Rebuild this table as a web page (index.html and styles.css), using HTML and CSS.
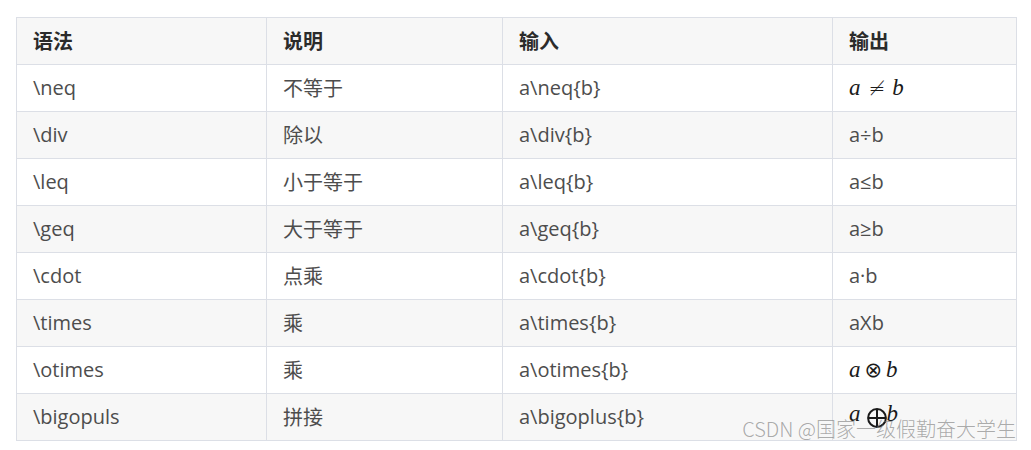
FILE: index.html
```html
<!DOCTYPE html>
<html lang="zh-CN">
<head>
<meta charset="utf-8">
<title>LaTeX 运算符</title>
<link rel="stylesheet" href="styles.css">
</head>
<body>
<div class="page">
  <table class="ops">
    <colgroup>
      <col class="c1"><col class="c2"><col class="c3"><col class="c4">
    </colgroup>
    <thead>
      <tr><th>语法</th><th>说明</th><th>输入</th><th>输出</th></tr>
    </thead>
    <tbody>
      <tr><td>\neq</td><td>不等于</td><td>a\neq{b}</td><td><span class="math"><i>a</i><span class="rel">≠</span><i>b</i></span></td></tr>
      <tr><td>\div</td><td>除以</td><td>a\div{b}</td><td>a÷b</td></tr>
      <tr><td>\leq</td><td>小于等于</td><td>a\leq{b}</td><td>a≤b</td></tr>
      <tr><td>\geq</td><td>大于等于</td><td>a\geq{b}</td><td>a≥b</td></tr>
      <tr><td>\cdot</td><td>点乘</td><td>a\cdot{b}</td><td>a·b</td></tr>
      <tr><td>\times</td><td>乘</td><td>a\times{b}</td><td>aXb</td></tr>
      <tr><td>\otimes</td><td>乘</td><td>a\otimes{b}</td><td><span class="math"><i>a</i><span class="bin">⊗</span><i>b</i></span></td></tr>
      <tr><td>\bigopuls</td><td>拼接</td><td>a\bigoplus{b}</td><td><span class="math raised"><i>a</i><svg class="bigop" viewBox="0 0 20 20" width="20" height="20" aria-hidden="true"><circle cx="10" cy="10" r="8.9" fill="none" stroke="#1a1a1a" stroke-width="2"/><path d="M10 1.1V18.9M1.1 10H18.9" stroke="#1a1a1a" stroke-width="2"/></svg><i>b</i></span></td></tr>
    </tbody>
  </table>
  <div class="watermark">CSDN @国家一级假勤奋大学生</div>
</div>
</body>
</html>
```

FILE: styles.css
```css
html, body {
  margin: 0;
  padding: 0;
  background: #ffffff;
}

.page {
  position: relative;
  width: 1031px;
  height: 450px;
  overflow: hidden;
  padding: 17px 0 0 16px;
  box-sizing: border-box;
  font-family: "Open Sans", "Noto Sans CJK SC", sans-serif;
  font-size: 20px;
  color: #4d4d4d;
}

.ops {
  border-collapse: collapse;
  table-layout: fixed;
  width: 1000px;
}

.c1 { width: 250px; }
.c2 { width: 236px; }
.c3 { width: 330px; }
.c4 { width: 184px; }

.ops th,
.ops td {
  border: 1px solid #dcdfe6;
  height: 46px;
  padding: 0 16px;
  text-align: left;
  vertical-align: middle;
  white-space: nowrap;
  line-height: 24px;
}

.ops th {
  background: #f7f7f7;
  color: #2b2b2b;
  font-family: "Noto Sans CJK SC", "Open Sans", sans-serif;
  font-weight: 700;
}

.ops tbody tr:nth-child(even) td {
  background: #f7f7f7;
}

.ops td:nth-child(2) {
  font-family: "Noto Sans CJK SC", sans-serif;
}

.math {
  font-family: "Liberation Serif", "DejaVu Serif", serif;
  font-size: 23px;
  color: #1a1a1a;
}

.math i {
  font-style: italic;
}

.math .rel {
  font-family: "DejaVu Sans", sans-serif;
  font-size: 20px;
  font-weight: 300;
  margin: 0 7px 0 8px;
}

.math .bin {
  font-family: "DejaVu Sans", sans-serif;
  font-size: 21px;
  margin: 0 4px;
}

.math.raised {
  display: inline-block;
  vertical-align: 6px;
}

.bigop {
  vertical-align: -7px;
  margin: 0 0 0 6px;
}

.watermark {
  position: absolute;
  right: 15px;
  top: 415px;
  font-family: "Noto Sans CJK SC", "Liberation Sans", sans-serif;
  font-weight: 300;
  font-size: 20px;
  line-height: 28px;
  color: rgba(120, 120, 120, 0.62);
  white-space: nowrap;
}
```
